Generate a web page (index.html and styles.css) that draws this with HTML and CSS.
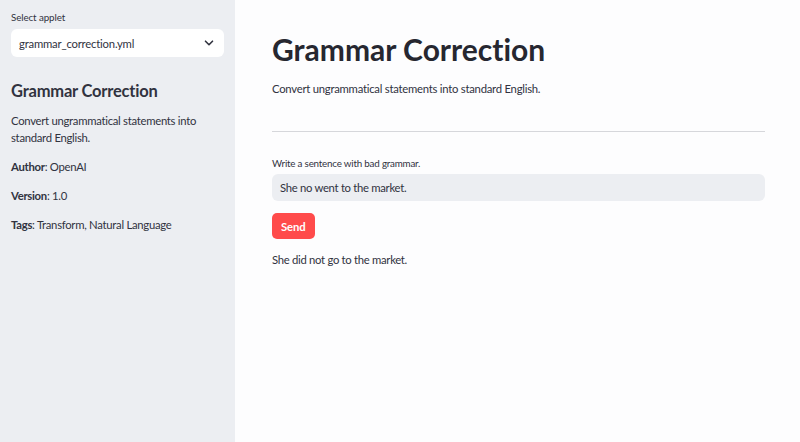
FILE: index.html
```html
<!DOCTYPE html>
<html>
<head>
<meta charset="utf-8">
<link rel="stylesheet" href="styles.css">
</head>
<body>
<div class="app">
  <aside class="sidebar">
    <label class="field-label">Select applet</label>
    <div class="select">
      <span>grammar_correction.yml</span>
      <svg class="chev" width="10" height="6" viewBox="0 0 10 6"><path d="M1.5 1.2l3.5 3.5 3.5-3.5" fill="none" stroke="#31333f" stroke-width="1.6" stroke-linecap="round" stroke-linejoin="round"/></svg>
    </div>
    <h2 class="side-title">Grammar Correction</h2>
    <p class="side-desc">Convert ungrammatical statements into standard English.</p>
    <p class="side-meta"><b>Author</b>: OpenAI</p>
    <p class="side-meta"><b>Version</b>: 1.0</p>
    <p class="side-meta"><b>Tags</b>: Transform, Natural Language</p>
  </aside>
  <main class="main">
    <h1 class="title">Grammar Correction</h1>
    <p class="subtitle">Convert ungrammatical statements into standard English.</p>
    <hr class="divider">
    <label class="input-label">Write a sentence with bad grammar.</label>
    <div class="input">She no went to the market.</div>
    <button class="send">Send</button>
    <p class="result">She did not go to the market.</p>
  </main>
</div>
</body>
</html>
```
FILE: styles.css
```css
html, body {
  margin: 0;
  padding: 0;
  height: 100%;
}
body {
  font-family: Lato, "Noto Sans", sans-serif;
  font-variant-ligatures: none;
  color: #31333f;
}
.app {
  display: flex;
  height: 442px;
  overflow: hidden;
}
.sidebar {
  width: 235px;
  flex: none;
  background: #eceef2;
  box-sizing: border-box;
  padding: 11px 11px 0 11px;
  display: flex;
  flex-direction: column;
}
.field-label {
  font-size: 9.8px;
  letter-spacing: -0.1px;
  line-height: 13px;
  margin-bottom: 5px;
}
.select {
  background: #fff;
  border-radius: 6px;
  height: 28px;
  display: flex;
  align-items: center;
  justify-content: space-between;
  padding: 0 10px 0 8px;
  font-size: 11.3px;
  letter-spacing: -0.2px;
}
.chev { display: block; }
.side-title {
  margin: 23px 0 0 0;
  font-size: 16.5px;
  letter-spacing: -0.2px;
  line-height: 22px;
  font-weight: 700;
}
.side-desc {
  margin: 10px 0 0 0;
  font-size: 11.3px;
  letter-spacing: -0.28px;
  line-height: 17px;
}
.side-meta {
  margin: 12px 0 0 0;
  font-size: 11.3px;
  letter-spacing: -0.28px;
  line-height: 17px;
}
.main {
  flex: 1;
  background: #fdfdfe;
  padding: 0 35px 0 37px;
}
.title {
  margin: 32px 0 0 0;
  font-size: 30px;
  line-height: 34px;
  font-weight: 700;
  color: #262730;
}
.subtitle {
  margin: 15px 0 0 0;
  font-size: 11.3px;
  letter-spacing: -0.25px;
  line-height: 16px;
}
.divider {
  border: none;
  border-top: 1px solid #d6d7db;
  margin: 34px 0 0 0;
}
.input-label {
  display: block;
  margin-top: 25px;
  font-size: 9.8px;
  letter-spacing: -0.2px;
  line-height: 13px;
}
.input {
  margin-top: 4px;
  height: 27px;
  background: #eceef2;
  border-radius: 6px;
  display: flex;
  align-items: center;
  padding-left: 8px;
  font-size: 11.3px;
  letter-spacing: -0.3px;
}
.send {
  display: block;
  margin-top: 12px;
  height: 26px;
  padding: 0 9px;
  background: #ff4b4b;
  color: #fff;
  border: none;
  border-radius: 5px;
  font-family: inherit;
  font-weight: 700;
  font-size: 11.3px;
  letter-spacing: -0.1px;
}
.result {
  margin: 13px 0 0 0;
  font-size: 11.3px;
  letter-spacing: -0.3px;
  line-height: 16px;
}
```
